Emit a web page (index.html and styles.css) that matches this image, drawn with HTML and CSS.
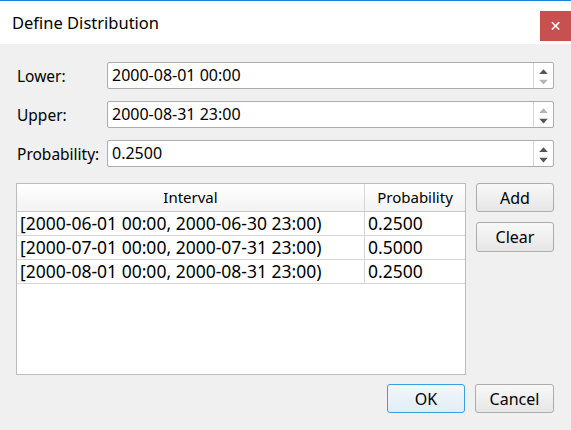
FILE: index.html
```html
<!DOCTYPE html>
<html>
<head>
<meta charset="utf-8">
<link rel="stylesheet" href="styles.css">
</head>
<body>
<div class="window">
  <div class="titlebar">
    <span class="title">Define Distribution</span>
    <div class="close">&#x2715;</div>
  </div>
  <div class="content">
    <div class="form">
      <label class="label">Lower:</label>
      <div class="spin">
        <span class="value">2000-08-01 00:00</span>
        <svg class="arrows" width="20" height="25" viewBox="0 0 20 25"><polygon points="5.5,11 14.5,11 10,6" fill="#555"/><polygon points="5.5,17 14.5,17 10,22" fill="#b4b4b4"/></svg>
      </div>
      <label class="label">Upper:</label>
      <div class="spin">
        <span class="value">2000-08-31 23:00</span>
        <svg class="arrows" width="20" height="25" viewBox="0 0 20 25"><polygon points="5.5,11 14.5,11 10,6" fill="#b4b4b4"/><polygon points="5.5,17 14.5,17 10,22" fill="#555"/></svg>
      </div>
      <label class="label">Probability:</label>
      <div class="spin">
        <span class="value">0.2500</span>
        <svg class="arrows" width="20" height="25" viewBox="0 0 20 25"><polygon points="5.5,11 14.5,11 10,6" fill="#555"/><polygon points="5.5,17 14.5,17 10,22" fill="#555"/></svg>
      </div>
    </div>
    <div class="middle">
      <div class="table">
        <div class="row head">
          <div class="cell c1">Interval</div>
          <div class="cell c2">Probability</div>
        </div>
        <div class="row">
          <div class="cell c1">[2000-06-01 00:00, 2000-06-30 23:00)</div>
          <div class="cell c2">0.2500</div>
        </div>
        <div class="row">
          <div class="cell c1">[2000-07-01 00:00, 2000-07-31 23:00)</div>
          <div class="cell c2">0.5000</div>
        </div>
        <div class="row">
          <div class="cell c1">[2000-08-01 00:00, 2000-08-31 23:00)</div>
          <div class="cell c2">0.2500</div>
        </div>
      </div>
      <div class="side">
        <button class="btn">Add</button>
        <button class="btn">Clear</button>
      </div>
    </div>
    <div class="footer">
      <button class="btn default">OK</button>
      <button class="btn">Cancel</button>
    </div>
  </div>
</div>
</body>
</html>
```
FILE: styles.css
```css
* { box-sizing: border-box; }
html, body { margin: 0; padding: 0; }
body {
  width: 571px;
  height: 430px;
  background: #f0f0f0;
  font-family: "Noto Sans", "Open Sans", sans-serif;
  color: #000;
  overflow: hidden;
}
.window { width: 571px; height: 430px; display: flex; flex-direction: column; }
.titlebar {
  height: 44px;
  background: #fff;
  border-top: 1px solid #1883d7;
  display: flex;
  align-items: flex-start;
  justify-content: space-between;
}
.title {
  font-size: 16.5px;
  line-height: 20px;
  margin-top: 12px;
  margin-left: 12px;
}
.close {
  width: 31px;
  height: 30px;
  margin-top: 10px;
  background: #c75050;
  color: #fff;
  font-size: 14px;
  font-weight: bold;
  display: flex;
  align-items: center;
  justify-content: center;
  font-family: "DejaVu Sans", sans-serif;
}
.content { padding: 18px 17px 0 16px; display: flex; flex-direction: column; }
.form {
  display: grid;
  grid-template-columns: 91px 447px;
  row-gap: 12px;
  align-items: center;
}
.label { font-size: 15.5px; padding-left: 1px; }
.spin {
  height: 27px;
  border: 1px solid #acacac;
  border-radius: 2px;
  background: #fff;
  display: flex;
  align-items: center;
}
.value { flex: 1; font-size: 16px; padding-left: 4px; line-height: 25px; }
.arrows { border-left: 1px solid #d4d4d4; width: 20px; height: 25px; flex: none; }
.middle {
  margin-top: 16px;
  display: flex;
  gap: 10px;
}
.table {
  width: 450px;
  height: 192px;
  background: #fff;
  border: 1px solid #bcbcbc;
}
.row { display: flex; height: 24px; border-bottom: 1px solid #d6d6d6; }
.row.head {
  height: 28px;
  background: linear-gradient(#ffffff, #f3f3f3);
  border-bottom: 1px solid #c8c8c8;
}
.cell { font-size: 17.5px; line-height: 23px; padding-left: 3px; white-space: nowrap; overflow: hidden; }
.c1 { width: 348px; border-right: 1px solid #d6d6d6; }
.c2 { flex: 1; }
.head .cell { text-align: center; font-size: 15px; line-height: 27px; padding-left: 0; }
.side { display: flex; flex-direction: column; gap: 10px; }
.btn {
  width: 78px;
  height: 29px;
  border: 1px solid #adadad;
  border-radius: 3px;
  background: linear-gradient(#f8f8f8, #e6e6e6);
  font-family: "Noto Sans", "Open Sans", sans-serif;
  font-size: 16px;
  color: #000;
  padding: 0;
}
.btn:nth-child(2) { height: 30px; }
.footer {
  margin-top: 9px;
  display: flex;
  justify-content: flex-end;
  gap: 10px;
}
.footer .btn { height: 29px; }
.footer .btn:nth-child(2) { width: 79px; }
.btn.default {
  border-color: #3c9ce4;
  background: linear-gradient(#f1f7fc, #e2edf6);
}
```
